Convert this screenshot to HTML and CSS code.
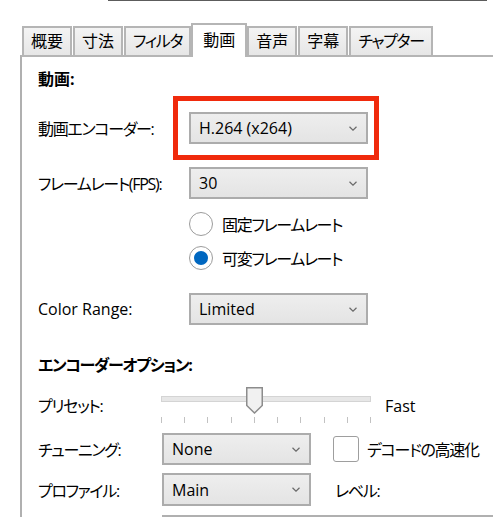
FILE: index.html
```html
<!DOCTYPE html>
<html lang="ja">
<head>
<meta charset="UTF-8">
<meta name="viewport" content="width=device-width, initial-scale=1.0">
<title>動画 - エンコード設定</title>
<link rel="stylesheet" href="styles.css">
</head>
<body>

<div class="topline"></div>

<div class="tabs">
    <div class="tab">概要</div>
    <div class="tab">寸法</div>
    <div class="tab kn">フィルタ</div>
    <div class="tab active">動画</div>
    <div class="tab">音声</div>
    <div class="tab">字幕</div>
    <div class="tab kn">チャプター</div>
</div>

<div class="panel">
    <h2 class="group-title">動画:</h2>

    <div class="row">
        <span class="label kn">動画エンコーダー:</span>
        <div class="select wide marked">
            <span>H.264 (x264)</span>
            <svg class="chev" width="8" height="5" viewBox="0 0 8 5"><polyline points="0.5,0.8 4,4.2 7.5,0.8" fill="none" stroke="#6a6a6a" stroke-width="1.2"/></svg>
            <div class="redbox"></div>
        </div>
    </div>

    <div class="row fps">
        <span class="label kn">フレームレート(FPS):</span>
        <div class="select wide">
            <span>30</span>
            <svg class="chev" width="8" height="5" viewBox="0 0 8 5"><polyline points="0.5,0.8 4,4.2 7.5,0.8" fill="none" stroke="#6a6a6a" stroke-width="1.2"/></svg>
        </div>
    </div>

    <div class="radios">
        <div class="radio kn"><span class="circle"></span>固定フレームレート</div>
        <div class="radio kn checked"><span class="circle"></span>可変フレームレート</div>
    </div>

    <div class="row range">
        <span class="label">Color Range:</span>
        <div class="select wide">
            <span>Limited</span>
            <svg class="chev" width="8" height="5" viewBox="0 0 8 5"><polyline points="0.5,0.8 4,4.2 7.5,0.8" fill="none" stroke="#6a6a6a" stroke-width="1.2"/></svg>
        </div>
    </div>

    <h2 class="group-title options-title kn">エンコーダーオプション:</h2>

    <div class="row opt preset">
        <span class="label kn">プリセット:</span>
        <div class="slider">
            <div class="track"></div>
            <svg class="thumb" width="17" height="27" viewBox="0 0 17 27"><polygon points="0.75,0.75 16.25,0.75 16.25,18.5 8.5,26 0.75,18.5" fill="#f1f1f1" stroke="#8c8c8c" stroke-width="1.5"/></svg>
            <div class="ticks">
                <i></i><i></i><i></i><i></i><i></i><i></i><i></i><i></i><i></i><i></i>
            </div>
        </div>
        <span class="fast">Fast</span>
    </div>

    <div class="row opt tuning">
        <span class="label kn">チューニング:</span>
        <div class="select narrow">
            <span>None</span>
            <svg class="chev" width="8" height="5" viewBox="0 0 8 5"><polyline points="0.5,0.8 4,4.2 7.5,0.8" fill="none" stroke="#6a6a6a" stroke-width="1.2"/></svg>
        </div>
        <label class="check kn"><span class="box"></span>デコードの高速化</label>
    </div>

    <div class="row opt profile">
        <span class="label kn">プロファイル:</span>
        <div class="select narrow">
            <span>Main</span>
            <svg class="chev" width="8" height="5" viewBox="0 0 8 5"><polyline points="0.5,0.8 4,4.2 7.5,0.8" fill="none" stroke="#6a6a6a" stroke-width="1.2"/></svg>
        </div>
        <span class="level kn">レベル:</span>
    </div>

    <div class="cutoff"></div>
</div>

</body>
</html>
```

FILE: styles.css
```css
/* page */
body {
    margin: 0;
    height: 517px;
    overflow: hidden;
    background: #ffffff;
    color: #000000;
    font-family: "Open Sans", "Noto Sans CJK JP", sans-serif;
    font-size: 16px;
    font-feature-settings: "palt";
}

/* kana-heavy text runs narrower in the original UI font */
.kn {
    letter-spacing: -1.3px;
}

.topline {
    margin-left: 108px;
    width: 379px;
    height: 1px;
    background: #5c5c5c;
}

/* tab strip */
.tabs {
    display: flex;
    align-items: flex-end;
    gap: 1px;
    margin: 22px 0 0 22px;
}
.tab {
    height: 29px;
    padding: 0 7px;
    box-sizing: border-box;
    border: 2px solid #b5b5b5;
    border-bottom: none;
    background: linear-gradient(#f4f4f4, #e6e6e6);
    line-height: 27px;
    white-space: nowrap;
}
.tab.active {
    position: relative;
    z-index: 1;
    height: 34px;
    margin: 0 -1px -2px -1px;
    padding: 0 10px;
    background: #ffffff;
    line-height: 30px;
}

/* main panel */
.panel {
    margin-left: 20px;
    padding: 11px 0 0 16px;
    border-left: 2px solid #b0b0b0;
    border-top: 2px solid #b5b5b5;
}
.group-title {
    margin: 0;
    font-size: 16px;
    font-weight: bold;
    line-height: 22px;
}
.options-title {
    margin-top: 29px;
}

.row {
    display: flex;
    align-items: center;
    margin-top: 22px;
}
.row .label {
    width: 151px;
    flex-shrink: 0;
    white-space: nowrap;
}
.row.fps { margin-top: 23px; }
.row.range { margin-top: 23px; }

/* combo boxes */
.select {
    position: relative;
    display: flex;
    align-items: center;
    justify-content: space-between;
    height: 32px;
    padding: 0 9px 0 8px;
    box-sizing: border-box;
    border: 2px solid #acacac;
    background: linear-gradient(#eeeeee, #e4e4e4);
    line-height: 28px;
}
.select.wide { width: 179px; }
.select.narrow { width: 149px; }
.chev { flex-shrink: 0; }

.redbox {
    position: absolute;
    top: -18px;
    left: -18px;
    right: -13px;
    bottom: -18px;
    border: 5px solid #f02a0c;
}

/* radio buttons */
.radios {
    display: flex;
    flex-direction: column;
    gap: 10px;
    margin: 13px 0 0 151px;
}
.radio {
    display: flex;
    align-items: center;
    gap: 9px;
    height: 24px;
    white-space: nowrap;
}
.circle {
    display: flex;
    align-items: center;
    justify-content: center;
    width: 24px;
    height: 24px;
    box-sizing: border-box;
    border: 1.5px solid #9c9c9c;
    border-radius: 50%;
    background: #ffffff;
}
.radio.checked .circle::after {
    content: "";
    width: 14px;
    height: 14px;
    border-radius: 50%;
    background: #0067c0;
}

/* encoder options */
.row.opt .label { width: 124px; }
.row.preset { margin-top: 11px; }
.row.tuning { margin-top: 10px; }
.row.profile { margin-top: 8px; }
.row.profile .select { height: 33px; }

.slider {
    position: relative;
    width: 210px;
    height: 36px;
    margin-left: -1px;
}
.track {
    margin-top: 9px;
    height: 6px;
    box-sizing: border-box;
    border: 1px solid #d4d4d4;
    background: #e7e7e7;
}
.thumb {
    position: absolute;
    top: 0;
    left: 85px;
}
.ticks {
    display: flex;
    justify-content: space-between;
    margin-top: 15px;
}
.ticks i {
    width: 1px;
    height: 6px;
    background: #c2c2c2;
}
.fast {
    margin: 2px 0 0 14px;
}

.check {
    display: flex;
    align-items: center;
    gap: 8px;
    margin-left: 22px;
    white-space: nowrap;
}
.box {
    width: 26px;
    height: 26px;
    box-sizing: border-box;
    border: 1.5px solid #9e9e9e;
    border-radius: 3px;
    background: #ffffff;
}
.level {
    margin-left: 24px;
}

.cutoff {
    margin: 9px 0 0 124px;
    height: 20px;
    border-top: 2px solid #b0b0b0;
    border-left: 2px solid #b0b0b0;
}
```
